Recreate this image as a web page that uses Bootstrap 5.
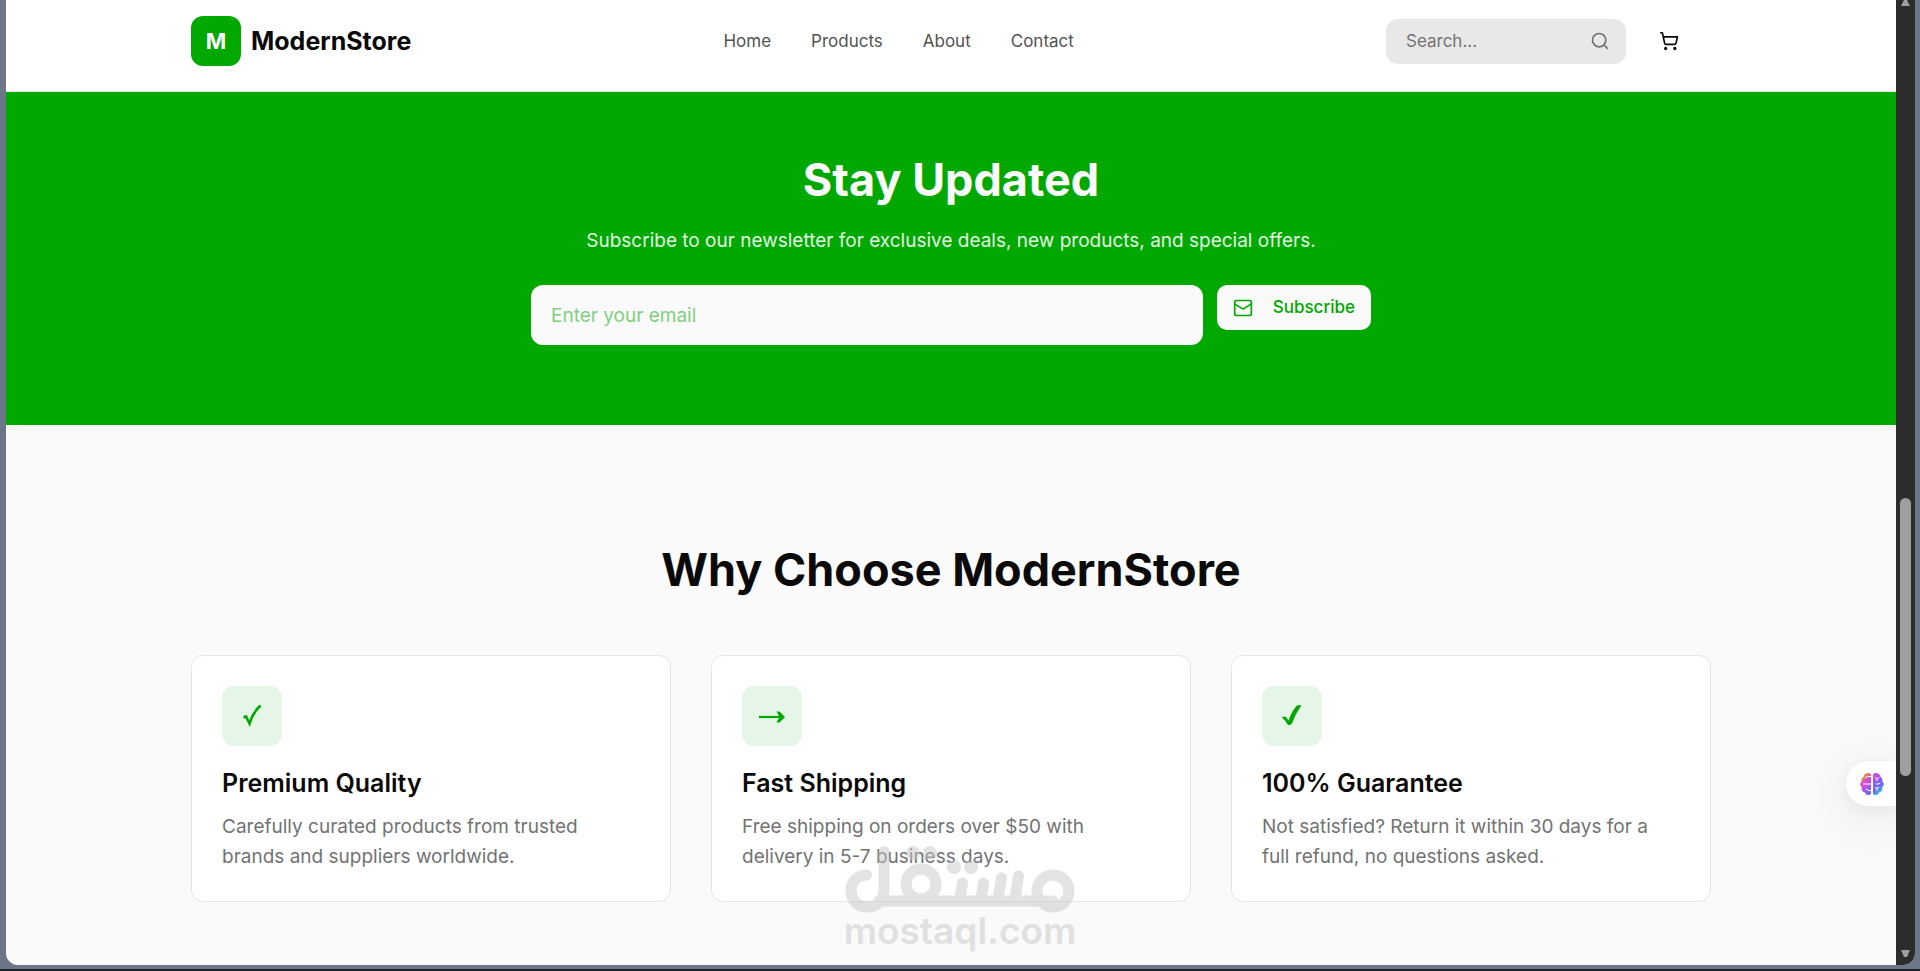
<!DOCTYPE html>
<html lang="en">
<head>
<meta charset="utf-8">
<meta name="viewport" content="width=device-width, initial-scale=1">
<title>ModernStore</title>
<link href="https://cdn.jsdelivr.net/npm/bootstrap@5.3.0/dist/css/bootstrap.min.css" rel="stylesheet">
<style>
  :root { --green: #00a800; --ink: #0a0a0a; --paper: #fafafa; --line: #e5e5e5; --slate: #6b7786; }
  body { font-family: Inter, "Liberation Sans", sans-serif; font-size: 19px; line-height: 30px; color: var(--ink); background: #1d222b; }
  .window-frame { height: 100vh; padding: 0 5px 4px 6px; background: var(--slate); border-bottom: 2px solid #1d222b; }
  .viewport-area { border-radius: 0 0 12px 12px; background: var(--paper); }
  .store-wrap { max-width: 1600px; padding: 0 40px; margin: 0 auto; }
  .store-header { height: 92px; padding-top: 16px; background: #fff; border-bottom: 1px solid var(--line); }
  .header-row { height: 50px; }
  .brand-link { gap: 10px; }
  .logo-tile { width: 50px; height: 50px; border-radius: 12px; background: var(--green); color: var(--paper); font-size: 22px; font-weight: 700; }
  .logo-name { font-size: 25px; font-weight: 700; color: var(--ink); }
  .main-links { gap: 40px; }
  .main-links a { font-size: 17px; color: #525252; text-decoration: none; }
  .header-tools { gap: 20px; }
  .search-box { width: 240px; height: 45px; padding: 0 16px 0 20px; border-radius: 12px; background: #e8e8e8; color: #737373; }
  .search-box input { font-size: 17px; outline: 0; }
  .search-box input::placeholder { color: #737373; opacity: 1; }
  .cart-btn { width: 45px; height: 45px; margin-right: 20px; color: var(--ink); }
  .cart-btn svg { display: block; margin: 0 auto; }
  .newsletter { height: 333px; padding-top: 58px; background: var(--green); color: var(--paper); }
  .big-title { font-size: 45px; line-height: 60px; font-weight: 700; margin: 0; }
  .newsletter p { margin: 16px 0 29px; color: #e2f5e2; }
  .newsletter form { max-width: 840px; gap: 14px; }
  .email-input { height: 60px; border: 0; border-radius: 12px; background: var(--paper); padding: 0 20px; font-size: 19px; outline: 0; }
  .email-input::placeholder { color: #7fd07f; opacity: 1; }
  .subscribe-btn { height: 45px; padding: 0 16px; gap: 20px; border-radius: 10px; background: var(--paper); color: var(--green); font-size: 17px; font-weight: 500; }
  .why { padding-top: 115px; }
  .why .big-title { margin-bottom: 55px; }
  .feature-grid { display: grid; grid-template-columns: repeat(3, 1fr); gap: 40px; }
  .feature { padding: 30px; height: 247px; border: 1px solid var(--line); border-radius: 12px; background: #fff; }
  .feature-icon { width: 60px; height: 60px; border-radius: 12px; background: #e6f6e6; color: var(--green); margin-bottom: 20px; }
  .feature h3 { font-size: 25px; line-height: 35px; font-weight: 600; margin: 0 0 11px; }
  .feature p { margin: 0; color: #737373; }
  .assistant-tab { right: 0; top: 761px; width: 50px; height: 45px; border: 0; border-radius: 24px 0 0 24px; background: #fff; box-shadow: 0 12px 60px rgba(0,0,0,.1), 0 4px 16px rgba(0,0,0,.06); padding: 0 0 0 14px; }
  .watermark { left: 0; right: 0; top: 845px; color: #c8c8c8; opacity: .5; pointer-events: none; }
  .watermark span { font-size: 37px; font-weight: 600; line-height: 32px; }
  .scroll-rail { width: 19px; background: #2c2c2c; border-radius: 0 0 8px 0; }
  .scroll-thumb { left: 4px; width: 11px; top: 498px; height: 278px; border-radius: 6px; background: #9f9f9f; }
  .rail-up { left: 5px; top: 0; }
  .rail-down { left: 5px; bottom: 8px; }
</style>
</head>
<body>
<div class="window-frame">
  <div class="viewport-area d-flex h-100 overflow-hidden position-relative">
    <div class="flex-grow-1 position-relative overflow-hidden">
      <header class="store-header">
        <div class="store-wrap">
          <div class="header-row d-flex align-items-center justify-content-between">
            <a href="#" class="brand-link d-flex align-items-center text-decoration-none">
              <span class="logo-tile d-flex align-items-center justify-content-center">M</span>
              <span class="logo-name">ModernStore</span>
            </a>
            <nav class="main-links d-flex">
              <a href="#">Home</a><a href="#">Products</a><a href="#">About</a><a href="#">Contact</a>
            </nav>
            <div class="header-tools d-flex align-items-center">
              <div class="search-box d-flex align-items-center">
                <input type="text" class="border-0 bg-transparent p-0 w-100" placeholder="Search..." aria-label="Search">
                <svg width="20" height="20" viewBox="0 0 24 24" fill="none" stroke="currentColor" stroke-width="2" stroke-linecap="round" stroke-linejoin="round" class="flex-shrink-0"><circle cx="11" cy="11" r="8"/><path d="m21 21-4.3-4.3"/></svg>
              </div>
              <button type="button" class="cart-btn btn p-0 border-0" aria-label="Cart">
                <svg width="20" height="20" viewBox="0 0 24 24" fill="none" stroke="currentColor" stroke-width="2" stroke-linecap="round" stroke-linejoin="round"><circle cx="8" cy="21" r="1"/><circle cx="19" cy="21" r="1"/><path d="M2.05 2.05h2l2.66 12.42a2 2 0 0 0 2 1.58h9.78a2 2 0 0 0 1.95-1.57l1.65-7.43H5.12"/></svg>
              </button>
            </div>
          </div>
        </div>
      </header>

      <section class="newsletter text-center">
        <h2 class="big-title">Stay Updated</h2>
        <p>Subscribe to our newsletter for exclusive deals, new products, and special offers.</p>
        <form class="d-flex align-items-start mx-auto">
          <input type="email" class="email-input flex-grow-1" placeholder="Enter your email" aria-label="Email address">
          <button type="button" class="subscribe-btn btn border-0 d-flex align-items-center">
            <svg width="20" height="20" viewBox="0 0 24 24" fill="none" stroke="currentColor" stroke-width="2" stroke-linecap="round" stroke-linejoin="round"><rect x="2" y="3" width="20" height="18" rx="2"/><path d="m22 7-8.970 5.700a1.940 1.940 0 0 1-2.060 0L2 7"/></svg>
            <span>Subscribe</span>
          </button>
        </form>
      </section>

      <section class="why">
        <div class="store-wrap">
          <h2 class="big-title text-center">Why Choose ModernStore</h2>
          <div class="feature-grid">
            <article class="feature">
              <div class="feature-icon d-flex align-items-center justify-content-center">
                <svg width="30" height="30" viewBox="0 0 30 30" fill="none" stroke="currentColor" stroke-width="2.600"><path d="M6.500 16.500 9 15.500 12.500 22.500C14.500 16 18 9.500 23.500 4.500"/></svg>
              </div>
              <h3>Premium Quality</h3>
              <p>Carefully curated products from trusted<br>brands and suppliers worldwide.</p>
            </article>
            <article class="feature">
              <div class="feature-icon d-flex align-items-center justify-content-center">
                <svg width="30" height="30" viewBox="0 0 30 30"><path fill="none" stroke="currentColor" stroke-width="2.200" d="M2 16h24"/><path fill="currentColor" d="M19.500 10.500h3l5.500 5.500-5.500 5.500h-3l3-5.500Z"/></svg>
              </div>
              <h3>Fast Shipping</h3>
              <p>Free shipping on orders over $50 with<br>delivery in 5-7 business days.</p>
            </article>
            <article class="feature">
              <div class="feature-icon d-flex align-items-center justify-content-center">
                <svg width="30" height="30" viewBox="0 0 30 30" fill="currentColor"><path d="M5 16.500Q8 14 10.500 18L11.500 19.500Q15 9.500 20 4.500 22 3.500 24.300 4.500 18.500 12.500 15 22.500 13.500 24.500 11 24 8.500 19.500 5 16.500Z"/></svg>
              </div>
              <h3>100% Guarantee</h3>
              <p>Not satisfied? Return it within 30 days for a<br>full refund, no questions asked.</p>
            </article>
          </div>
        </div>
      </section>

      <button type="button" class="assistant-tab position-absolute d-flex align-items-center" aria-label="Assistant">
        <svg width="24" height="24" viewBox="0 0 24 24">
          <defs><linearGradient id="brainFill" x1="0" y1="0" x2="1" y2="1"><stop offset=".16" stop-color="#e09a2c"/><stop offset=".28" stop-color="#d94fd0"/><stop offset=".44" stop-color="#c04fe0"/><stop offset=".58" stop-color="#8062f0"/><stop offset=".72" stop-color="#7068f0"/><stop offset=".84" stop-color="#35b4ee"/></linearGradient></defs>
          <path fill="url(#brainFill)" d="M11 2C8-.5 3.500 1.500 3.500 5 1.500 6 1 8 1.800 9.500-.5 11-.2 14 1.800 15 1 18 2.500 20.500 5 20.500 6.500 24 10 23.500 11 21.500ZM13 2C16-.5 20.500 1.500 20.500 5 22.500 6 23 8 22.200 9.500 24.500 11 24.200 14 22.200 15 23 18 21.500 20.500 19 20.500 17.500 24 14 23.500 13 21.500Z"/>
          <path fill="none" stroke="#fff" stroke-width="1" d="M3 12h8M5 6q2-2 6-1.500M6 17q2 2 5 1.500M15 5l2 2.500 2-2M17 7.500V9M16 12h3l1-1M15 16h3l1-1M17 16v3"/>
        </svg>
      </button>
    </div>

    <div class="scroll-rail position-relative flex-shrink-0">
      <svg class="rail-up position-absolute" width="9" height="7"><path fill="#9f9f9f" d="M3 0h3l3 6H0z"/></svg>
      <div class="scroll-thumb position-absolute"></div>
      <svg class="rail-down position-absolute" width="9" height="7"><path fill="#9f9f9f" d="M0 0h9L6 7H3z"/></svg>
    </div>
  </div>

  <div class="watermark position-absolute d-flex flex-column align-items-center">
    <svg width="230" height="70" viewBox="0 0 230 70" fill="none" stroke="currentColor" stroke-width="11" stroke-linecap="round" stroke-linejoin="round">
      <path d="M21.500 30C-.5 31 2 62 22 62 32 62 39 55 39 44V6.500M34 56H190"/>
      <circle cx="76" cy="39" r="15"/><circle cx="208" cy="46" r="16"/>
      <path d="M115 54 117.500 38M136 54 138.500 38M153 54 156.500 33M170 54 173.500 31M190 56h18"/>
      <g fill="currentColor" stroke="none"><circle cx="68" cy="8" r="7"/><circle cx="85" cy="8" r="7"/><circle cx="109" cy="22" r="7"/><circle cx="126" cy="22" r="7"/></g>
    </svg>
    <span>mostaql.com</span>
  </div>
</div>
<script src="https://cdn.jsdelivr.net/npm/bootstrap@5.3.0/dist/js/bootstrap.bundle.min.js"></script>
</body>
</html>
